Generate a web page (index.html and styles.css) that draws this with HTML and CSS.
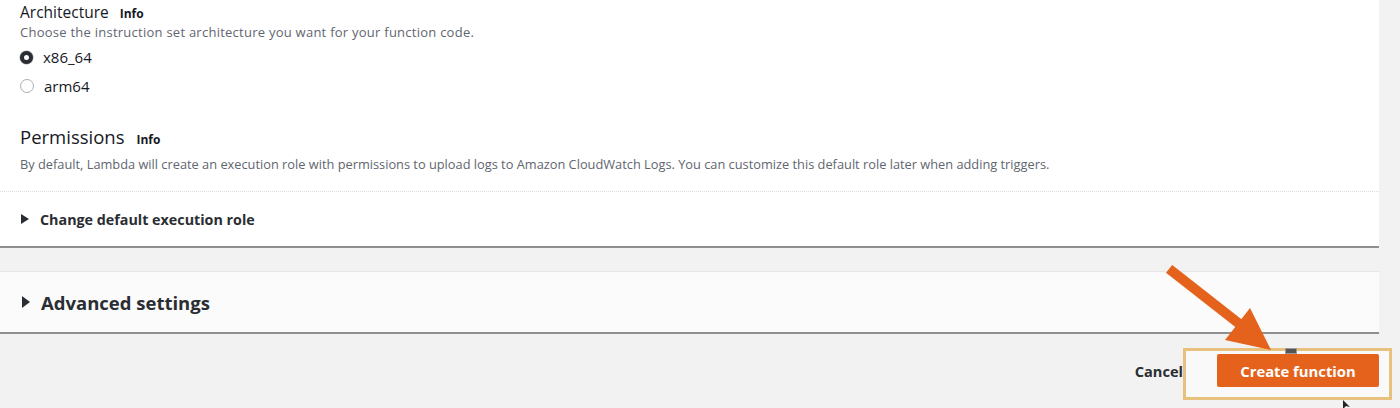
FILE: index.html
```html
<!DOCTYPE html>
<html>
<head>
<meta charset="utf-8">
<link rel="stylesheet" href="styles.css">
</head>
<body>
<div class="highlight"></div>
<div class="page">
  <div class="card main-card">
    <div class="section">
      <div class="heading"><span class="h-arch">Architecture</span><span class="info">Info</span></div>
      <div class="desc arch-desc">Choose the instruction set architecture you want for your function code.</div>
      <div class="radios">
        <label class="radio"><span class="dot checked"></span><span>x86_64</span></label>
        <label class="radio"><span class="dot"></span><span>arm64</span></label>
      </div>
      <div class="heading perm"><span class="h-perm">Permissions</span><span class="info">Info</span></div>
      <div class="desc perm-desc">By default, Lambda will create an execution role with permissions to upload logs to Amazon CloudWatch Logs. You can customize this default role later when adding triggers.</div>
    </div>
    <div class="expander">
      <span class="tri"></span><span class="exp-label">Change default execution role</span>
    </div>
  </div>
  <div class="card adv-card">
    <span class="tri big"></span><span class="adv-label">Advanced settings</span>
  </div>
  <div class="footer">
    <button class="cancel">Cancel</button>
    <button class="primary">Create function</button>
  </div>
</div>
<div class="mini-icon"></div>
<svg class="arrow" width="130" height="110" viewBox="0 0 130 110">
  <line x1="8" y1="10" x2="72" y2="60" stroke="#e5621c" stroke-width="10" stroke-linecap="square"/>
  <polygon points="60,78 85,46 106,88" fill="#e5621c"/>
</svg>
<svg class="cursor" width="10" height="10" viewBox="0 0 10 10"><polygon points="0,0 0,9 3,6 7,7" fill="#222"/></svg>
</body>
</html>
```
FILE: styles.css
```css
html, body {
  margin: 0;
  padding: 0;
}
body {
  width: 1400px;
  height: 408px;
  overflow: hidden;
  background: #f2f2f2;
  font-family: "Open Sans", "Noto Sans", sans-serif;
  color: #16191f;
  position: relative;
}
.page {
  width: 1379px;
  position: relative;
}
.card {
  background: #ffffff;
}
.main-card {
  border-bottom: 2px solid #8f8f8f;
}
.section {
  padding: 0 0 18px 20px;
  border-bottom: 1px dotted #dcdcdc;
}
.heading {
  display: flex;
  align-items: baseline;
  height: 24px;
  line-height: 24px;
}
.h-arch {
  font-size: 15.5px;
  color: #16191f;
}
.info {
  font-size: 12px;
  font-weight: 700;
  margin-left: 11px;
  color: #16191f;
}
.desc {
  font-size: 12.8px;
  line-height: 16px;
  color: #5f6670;
}
.arch-desc {
  font-size: 13px;
  letter-spacing: 0.25px;
}
.radios {
  margin-top: 3px;
  display: flex;
  flex-direction: column;
  gap: 1px;
}
.radio {
  display: flex;
  align-items: center;
  height: 28px;
  font-size: 15px;
  gap: 10px;
}
.dot {
  width: 12px;
  height: 12px;
  border-radius: 50%;
  border: 1px solid #a9b0b6;
  box-sizing: content-box;
  background: #fff;
}
.dot.checked {
  width: 5px;
  height: 5px;
  border: 4.5px solid #2a2e33;
  box-shadow: 0 0 0 0.5px #9aa0a6;
}
.perm {
  margin-top: 23px;
  height: 28px;
  line-height: 28px;
}
.h-perm {
  font-size: 18.5px;
}
.perm .info {
  margin-left: 12px;
}
.perm-desc {
  margin-top: 4px;
  line-height: 18px;
}
.expander {
  height: 54px;
  display: flex;
  align-items: center;
  padding-left: 21px;
}
.tri {
  width: 0;
  height: 0;
  border-top: 5px solid transparent;
  border-bottom: 5px solid transparent;
  border-left: 8px solid #2a2e33;
  margin-right: 11px;
}
.exp-label {
  font-size: 14.3px;
  font-weight: 700;
  color: #2a2e33;
}
.adv-card {
  margin-top: 23px;
  height: 60px;
  border-top: 1px solid #e6e6e6;
  border-bottom: 2px solid #8f8f8f;
  background: #fbfbfb;
  display: flex;
  align-items: center;
  padding-left: 22px;
}
.tri.big {
  border-top-width: 6px;
  border-bottom-width: 6px;
  border-left-width: 8px;
  margin-right: 11px;
}
.adv-label {
  font-size: 18.5px;
  font-weight: 700;
  color: #2a2e33;
}
.footer {
  margin-top: 20px;
  display: flex;
  justify-content: flex-end;
  align-items: center;
  gap: 34px;
}
.cancel {
  background: none;
  border: none;
  padding: 0;
  font-family: inherit;
  font-size: 14.6px;
  font-weight: 700;
  color: #2a2e33;
}
.primary {
  width: 162px;
  height: 33px;
  background: #e5621c;
  border: none;
  border-radius: 2px;
  color: #ffffff;
  font-family: inherit;
  font-size: 14.8px;
  font-weight: 700;
}
.highlight {
  position: absolute;
  left: 1183px;
  top: 348px;
  width: 203px;
  height: 46px;
  border: 3px solid #e8c27c;
  background: #f9f9f9;
}
.mini-icon {
  position: absolute;
  left: 1285px;
  top: 348px;
  width: 10px;
  height: 4px;
  background: #555;
  border: 1px solid #999;
}
.arrow {
  position: absolute;
  left: 1165px;
  top: 262px;
}
.cursor {
  position: absolute;
  left: 1343px;
  top: 400px;
}
```
